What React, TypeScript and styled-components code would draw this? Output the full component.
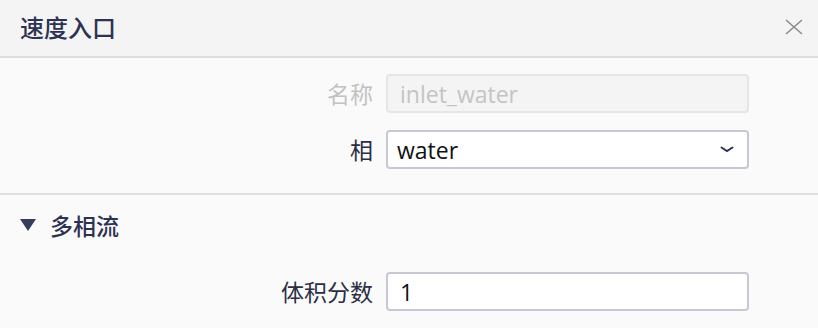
import React from "react";
import styled, { createGlobalStyle } from "styled-components";

const Global = createGlobalStyle`
  html, body { margin: 0; padding: 0; background: #fafafa; }
  body { font-family: "Open Sans", "Noto Sans CJK SC", sans-serif; }
  * { box-sizing: border-box; }
`;

const Panel = styled.div`
  width: 818px;
  height: 328px;
  background: #fafafa;
  overflow: hidden;
`;

const Header = styled.div`
  height: 58px;
  display: flex;
  align-items: center;
  justify-content: space-between;
  padding: 0 15px 0 20px;
  background: #f4f4f4;
  border-bottom: 2px solid #dedede;
`;

const Title = styled.div`
  font-family: "Noto Sans CJK SC", sans-serif;
  font-size: 24px;
  font-weight: 500;
  color: #2c3352;
  line-height: 1;
  padding-bottom: 2px;
`;

const CloseButton = styled.button`
  border: none;
  background: transparent;
  padding: 0;
  width: 18px;
  height: 18px;
  display: flex;
  align-items: center;
  justify-content: center;
  cursor: pointer;
  margin-bottom: 2px;
`;

const Section = styled.div<{ $divider?: boolean }>`
  display: flex;
  flex-direction: column;
  gap: 17px;
  padding: 16px 69px 24px 0;
  border-bottom: ${(p) => (p.$divider ? "2px solid #e0e0e0" : "none")};
`;

const Row = styled.div`
  display: grid;
  grid-template-columns: 1fr 363px;
  column-gap: 13px;
  align-items: center;
`;

const Label = styled.label<{ $disabled?: boolean }>`
  text-align: right;
  font-family: "Noto Sans CJK SC", sans-serif;
  font-size: 23px;
  color: ${(p) => (p.$disabled ? "#c2c2c2" : "#2a2f45")};
  line-height: 1;
`;

const Input = styled.input`
  height: 39px;
  width: 100%;
  border: 2px solid #c6c9d4;
  border-radius: 4px;
  background: #ffffff;
  padding: 0 12px;
  font-family: "Open Sans", "Noto Sans", sans-serif;
  font-size: 23px;
  color: #111;
  outline: none;
  &:disabled {
    background: #f4f4f4;
    border-color: #e6e6e6;
    color: #c4c4c4;
  }
`;

const SelectBox = styled.div`
  height: 39px;
  display: flex;
  align-items: center;
  justify-content: space-between;
  border: 2px solid #c6c9d4;
  border-radius: 4px;
  background: #ffffff;
  padding: 0 13px 0 9px;
  font-family: "Open Sans", "Noto Sans", sans-serif;
  font-size: 23px;
  color: #111;
`;

const GroupHeader = styled.div`
  height: 60px;
  display: flex;
  align-items: center;
  gap: 14px;
  padding-left: 20px;
`;

const Caret = styled.span`
  width: 0;
  height: 0;
  border-left: 8px solid transparent;
  border-right: 8px solid transparent;
  border-top: 12px solid #363d5c;
  margin-top: -1px;
`;

const GroupTitle = styled.span`
  font-family: "Noto Sans CJK SC", sans-serif;
  font-size: 23px;
  font-weight: 500;
  color: #2c3352;
  line-height: 1;
`;

const GroupBody = styled.div`
  display: flex;
  flex-direction: column;
  gap: 17px;
  padding: 17px 69px 0 0;
`;

export default function App() {
  return (
    <>
      <Global />
      <Panel>
        <Header>
          <Title>速度入口</Title>
          <CloseButton aria-label="close">
            <svg width="18" height="16" viewBox="0 0 18 16">
              <path d="M1 1 L17 15 M17 1 L1 15" stroke="#8c8c8c" strokeWidth="1.6" fill="none" />
            </svg>
          </CloseButton>
        </Header>
        <Section $divider>
          <Row>
            <Label $disabled>名称</Label>
            <Input disabled value="inlet_water" readOnly />
          </Row>
          <Row>
            <Label>相</Label>
            <SelectBox>
              <span>water</span>
              <svg width="14" height="7" viewBox="0 0 14 7">
                <path d="M1.5 1.5 L7 5 L12.5 1.5" stroke="#2c3352" strokeWidth="2" fill="none" strokeLinecap="round" />
              </svg>
            </SelectBox>
          </Row>
        </Section>
        <GroupHeader>
          <Caret />
          <GroupTitle>多相流</GroupTitle>
        </GroupHeader>
        <GroupBody>
          <Row>
            <Label>体积分数</Label>
            <Input value="1" readOnly />
          </Row>
        </GroupBody>
      </Panel>
    </>
  );
}
